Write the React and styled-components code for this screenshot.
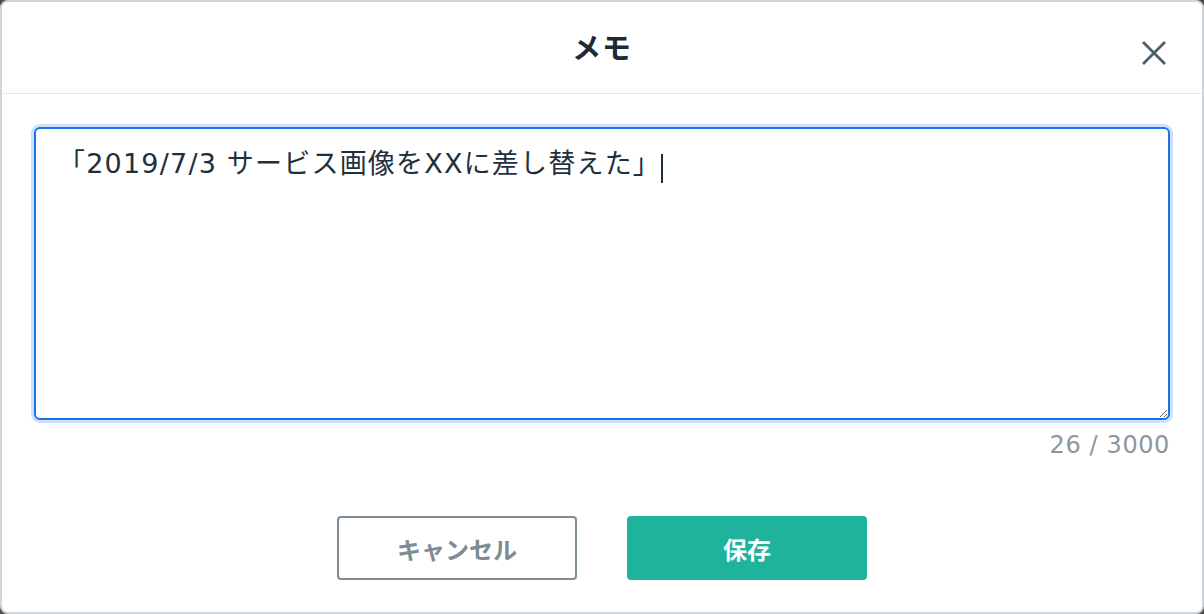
import { useState, useRef, useLayoutEffect } from 'react';
import styled, { createGlobalStyle } from "styled-components";

const GlobalStyle = createGlobalStyle`
	html, body {
		margin : 0;
		padding : 0;
		background : #4b4b4b;
	}
	* {
		box-sizing : border-box;
	}
	body, button, textarea {
		font-family : "Noto Sans CJK JP", "Noto Sans", sans-serif;
	}
`

const TEXT_FONT = '"DejaVu Sans", "Noto Sans CJK JP", sans-serif'
const TEXT_SPACING = 1.2
const TEXT_PAD = 22

// 모달 전체
const Modal = styled.div`
	display : flex;
	flex-direction : column;
	width : 1204px;
	height : 614px;
	border : 2px solid #d2d5d8;
	border-radius : 8px;
	background : #fff;
	overflow : hidden;
`

// 헤더
const Header = styled.header`
	display : grid;
	grid-template-columns : 1fr auto 1fr;
	align-items : center;
	height : 92px;
	padding : 0 36px;
	border-bottom : 1px solid #e6e8ea;
`
const Title = styled.h1`
	grid-column : 2;
	margin : -4px 0 0;
	font-size : 29px;
	font-weight : 700;
	color : #1c2b38;
	letter-spacing : 1px;
`
const CloseBtn = styled.button`
	justify-self : end;
	display : flex;
	align-items : center;
	justify-content : center;
	width : 24px;
	height : 24px;
	margin-top : 10px;
	padding : 0;
	border : 0;
	background : none;
	color : #4e616b;
	cursor : pointer;
`

// 본문
const Body = styled.div`
	display : flex;
	flex-direction : column;
	padding : 33px 32px 0;
`
const InputWrap = styled.div`
	position : relative;
`
const MemoInput = styled.textarea`
	display : block;
	width : 100%;
	height : 293px;
	padding : 15px ${TEXT_PAD}px;
	border : 2px solid #1a73e8;
	border-radius : 6px;
	box-shadow : 0 0 0 3px #cfe0fb;
	font-family : ${TEXT_FONT};
	font-size : 27px;
	letter-spacing : ${TEXT_SPACING}px;
	line-height : 1.5;
	color : #1e2f3e;
	caret-color : transparent;
	outline : none;
	resize : vertical;
`
// 입력 커서 표시
const Caret = styled.span`
	position : absolute;
	top : 27px;
	width : 2px;
	height : 29px;
	background : #1e2f3e;
	pointer-events : none;
`
const Counter = styled.div`
	margin-top : 9px;
	text-align : right;
	font-family : ${TEXT_FONT};
	font-size : 24px;
	letter-spacing : 0.6px;
	line-height : 32px;
	color : #8c979f;
`

// 버튼
const Footer = styled.div`
	display : flex;
	justify-content : center;
	gap : 50px;
	margin-top : 55px;
`
const Button = styled.button`
	width : 240px;
	height : 64px;
	border-radius : 4px;
	font-size : 24px;
	font-weight : 700;
	cursor : pointer;
	border : 2px solid ${({ $primary }) => $primary ? '#1fb39b' : '#7f8d96'};
	color : ${({ $primary }) => $primary ? '#fff' : '#7d8b94'};
	background : ${({ $primary }) => $primary ? '#1fb39b' : '#fff'};
`

const MAX = 3000

function App() {
	const [memo, setMemo] = useState('「2019/7/3 サービス画像をXXに差し替えた」')
	const [caretX, setCaretX] = useState(null)
	const inputRef = useRef(null)

	// 마지막 줄 텍스트 폭으로 커서 위치 계산
	useLayoutEffect(() => {
		const canvas = document.createElement('canvas')
		const ctx = canvas.getContext('2d')
		ctx.font = `27px ${TEXT_FONT}`
		if ('letterSpacing' in ctx) ctx.letterSpacing = `${TEXT_SPACING}px`
		const lastLine = memo.split('\n').pop()
		setCaretX(2 + TEXT_PAD + ctx.measureText(lastLine).width)
	}, [memo])

	return(
		<>
			<GlobalStyle />
			<Modal>
				<Header>
					<Title>メモ</Title>
					<CloseBtn type="button" aria-label="閉じる">
						<svg width="24" height="24" viewBox="0 0 24 24" fill="none" stroke="currentColor" strokeWidth="2.8" strokeLinecap="square">
							<path d="M2 2L22 22M22 2L2 22" />
						</svg>
					</CloseBtn>
				</Header>
				<Body>
					<InputWrap>
						<MemoInput
							ref={inputRef}
							value={memo}
							maxLength={MAX}
							onChange={(e) => setMemo(e.target.value)}
						/>
						{caretX !== null && <Caret style={{ left : caretX }} />}
					</InputWrap>
					<Counter>{26} / {MAX}</Counter>
					<Footer>
						<Button type="button">キャンセル</Button>
						<Button type="button" $primary>保存</Button>
					</Footer>
				</Body>
			</Modal>
		</>
	)
}

export default App
